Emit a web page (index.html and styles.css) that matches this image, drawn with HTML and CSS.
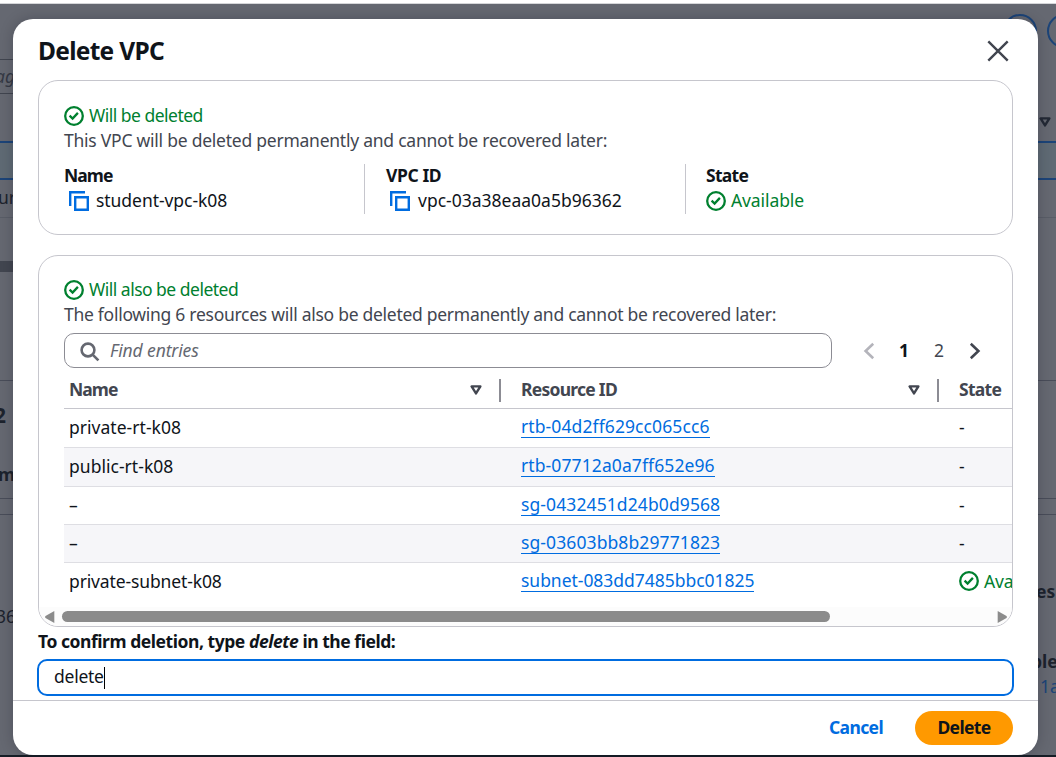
FILE: index.html
```html
<!DOCTYPE html>
<html lang="en">
<head>
<meta charset="utf-8">
<title>Delete VPC</title>
<link rel="stylesheet" href="styles.css">
</head>
<body>
<svg class="sprite" aria-hidden="true">
  <symbol id="check" viewBox="0 0 20 20"><circle cx="10" cy="10" r="8.8"/><path d="M5.6 9.6 8.6 12.6 13.9 6.9"/></symbol>
  <symbol id="copy" viewBox="0 0 20 20"><path d="M1.2 15V1.2H16M6.2 6.2H18.8V18.8H6.2Z"/></symbol>
  <symbol id="sort" viewBox="0 0 12 10"><path d="M1.6 1.4H10.4L6 8.4Z"/></symbol>
</svg>

<div class="page" aria-hidden="true">
  <div class="p-top"></div>
  <div class="p-head"><i class="ring"></i><i class="ring"></i></div>
  <div class="p-search"><em>ag</em></div>
  <div class="p-cols"><svg class="sort"><use href="#sort"/></svg></div>
  <div class="p-selected"></div>
  <div class="p-row"><span>ur</span></div>
  <div class="p-gap"></div>
  <div class="p-split"></div>
  <div class="p-panel"></div>
  <div class="p-title"><b>2</b></div>
  <div class="p-tabs"><b>m</b></div>
  <div class="p-line"></div>
  <div class="p-detail"><span class="p-id">36</span><div class="p-map"><b>es</b><b class="p-ble">ble</b><span class="p-az">1a</span></div></div>
  <div class="p-footer"></div>
</div>

<div class="dialog" role="dialog" aria-label="Delete VPC">
  <header class="dialog-head">
    <h1>Delete VPC</h1>
    <svg class="close" viewBox="0 0 22 22"><path d="M1.3 1.3 20.7 20.7M20.7 1.3 1.3 20.7"/></svg>
  </header>

  <section class="card card-vpc">
    <p class="status"><svg class="icon"><use href="#check"/></svg><span class="t-tight">Will be deleted</span></p>
    <p class="desc">This VPC will be deleted permanently and cannot be recovered later:</p>
    <div class="columns">
      <div class="col"><b class="k-name">Name</b><div class="value copyable"><svg class="icon"><use href="#copy"/></svg><span class="v-name">student-vpc-k08</span></div></div>
      <div class="col"><b class="k-id">VPC ID</b><div class="value copyable"><svg class="icon"><use href="#copy"/></svg><span class="v-id">vpc-03a38eaa0a5b96362</span></div></div>
      <div class="col"><b class="k-state">State</b><div class="value status"><svg class="icon"><use href="#check"/></svg><span class="v-state">Available</span></div></div>
    </div>
  </section>

  <section class="card card-resources">
    <p class="status"><svg class="icon"><use href="#check"/></svg><span class="t-tight">Will also be deleted</span></p>
    <p class="desc desc-res">The following 6 resources will also be deleted permanently and cannot be recovered later:</p>
    <div class="tools">
      <div class="search"><svg viewBox="0 0 20 20"><circle cx="8" cy="8" r="6.4"/><path d="M12.6 12.6 18.4 18.4"/></svg><em>Find entries</em></div>
      <nav class="pages">
        <svg class="prev" viewBox="0 0 12 18"><path d="M10.2 1.8 2.6 9l7.6 7.2"/></svg>
        <b>1</b><span>2</span>
        <svg class="next" viewBox="0 0 12 18"><path d="M1.8 1.8 9.4 9l-7.6 7.2"/></svg>
      </nav>
    </div>
    <div class="table">
      <div class="row head">
        <div class="cell"><span class="k-name">Name</span><svg class="sort"><use href="#sort"/></svg></div>
        <div class="cell"><span class="k-res">Resource ID</span><svg class="sort"><use href="#sort"/></svg></div>
        <div class="cell"><span class="k-state">State</span></div>
      </div>
      <div class="row"><div class="cell">private-rt-k08</div><div class="cell"><a>rtb-04d2ff629cc065cc6</a></div><div class="cell">-</div></div>
      <div class="row alt"><div class="cell">public-rt-k08</div><div class="cell"><a>rtb-07712a0a7ff652e96</a></div><div class="cell">-</div></div>
      <div class="row short"><div class="cell">–</div><div class="cell"><a>sg-0432451d24b0d9568</a></div><div class="cell">-</div></div>
      <div class="row short alt"><div class="cell">–</div><div class="cell"><a>sg-03603bb8b29771823</a></div><div class="cell">-</div></div>
      <div class="row last"><div class="cell tight">private-subnet-k08</div><div class="cell"><a class="subnet">subnet-083dd7485bbc01825</a></div><div class="cell status"><svg class="icon"><use href="#check"/></svg><span class="v-state">Available</span></div></div>
    </div>
    <div class="scroll">
      <svg viewBox="0 0 10 12"><path d="M9.3 0V12L0.5 7Q-.3 6 .5 5Z"/></svg>
      <div class="track"><div class="thumb"></div></div>
      <svg viewBox="0 0 10 12"><path d="M.7 0V12L9.5 7Q10.3 6 9.5 5Z"/></svg>
    </div>
  </section>

  <p class="confirm">To confirm deletion, type <em>delete</em> in the field:</p>
  <div class="input"><span>delete</span><i class="caret"></i></div>
  <footer class="dialog-foot">
    <button class="cancel">Cancel</button>
    <button class="primary">Delete</button>
  </footer>
</div>
</body>
</html>
```
FILE: styles.css
```css
* { box-sizing: border-box; }
body {
  margin: 0; width: 1056px; height: 757px; overflow: hidden;
  font: 17.5px/25px "Noto Sans", sans-serif; color: #0f141a; background: #656871;
}
h1, p { margin: 0; }
svg { fill: none; flex: none; }
.sprite { position: absolute; width: 0; height: 0; }

/* dimmed console page */
.page { display: flex; flex-direction: column; height: 757px; background: #656871; color: #1d232d; }
.page > div { flex: none; overflow: hidden; }
.p-top { height: 4px; background: #fff; border-bottom: 1px solid #d5d6d9; }
.p-head { height: 55px; display: flex; justify-content: flex-end; gap: 10px; padding-top: 10px; margin-right: -25px; }
.page .ring { flex: none; width: 34px; height: 34px; border: 2px solid #1c4478; border-radius: 50%; }
.p-search { height: 35px; width: 60px; border: solid #41454f; border-width: 1px 0; line-height: 33px; color: #343944; }
.p-search em { margin-left: -5px; }
.p-cols { height: 47px; padding: 23px 0 0 1039px; line-height: 0; }
.p-cols .sort { stroke: #232935; }
.p-selected { height: 39px; background: #5f6a74; border: solid #1c4478; border-width: 2px 0; }
.p-row { height: 38px; line-height: 35px; border-bottom: 1px solid #595d67; }
.p-row span { margin-left: -2px; }
.p-gap { height: 43px; }
.p-split { height: 11px; width: 60px; background: #424650; }
.p-panel { height: 109px; border-bottom: 1px solid #494d59; }
.p-title { height: 70px; font-size: 21px; line-height: 68px; }
.p-title b { margin-left: -6px; }
.p-tabs { height: 48px; line-height: 47px; border-bottom: 1px solid #494d59; }
.p-tabs b { margin-left: -2px; }
.p-line { height: 16px; border-bottom: 1px solid #494d59; }
.p-detail { height: 240px; display: flex; justify-content: space-between; }
.p-id { margin: 89px 0 0 -4px; }
.p-map { display: flex; flex-direction: column; width: 20px; padding-top: 64px; }
.p-ble { margin: 45px 0 0 -5px; }
.p-az { color: #1c4478; margin-left: 4px; }
.p-footer { height: 2px; background: #161d26; }

/* dialog */
.dialog {
  position: absolute; left: 13px; top: 19px; width: 1025px; height: 736px;
  background: #fff; border-radius: 20px; box-shadow: 0 0 14px rgba(0,7,22,.22);
  display: flex; flex-direction: column; overflow: hidden;
}
.dialog-head { height: 61px; padding: 3px 29px 0 25px; display: flex; align-items: center; justify-content: space-between; }
h1 { font-size: 24.5px; line-height: 30px; letter-spacing: -.7px; }
.close { width: 22px; height: 22px; stroke: #424650; stroke-width: 2.4; }
.card { margin: 0 25px; border: 1px solid #c6c6cd; border-radius: 20px; padding-left: 25px; overflow: hidden; flex: none; }
.card-vpc { height: 155px; padding-top: 22px; }
.card-resources { height: 372px; margin-top: 20px; padding-top: 21px; display: flex; flex-direction: column; }
.icon { width: 20px; height: 20px; stroke-width: 2.3; stroke: currentColor; }
.status { display: flex; align-items: center; gap: 5px; color: #00802f; }
.t-tight { letter-spacing: -.51px; }
.desc { color: #424650; letter-spacing: -.24px; }
.desc-res { letter-spacing: -.277px; }
.columns { display: flex; margin-top: 11px; }
.col { height: 50px; width: 321px; }
.col:first-child { width: 300px; }
.col + .col { border-left: 1px solid #c6c6cd; padding-left: 21px; }
.col + .col + .col { padding-left: 20px; }
.col b { display: block; margin-top: -1px; }
.value { display: flex; align-items: center; }
.copyable { padding-left: 5px; gap: 7px; }
.copyable .icon { color: #006ce0; stroke-width: 2.4; }
.col + .col .copyable { padding-left: 4px; gap: 8px; }
.copyable span { color: #0f141a; }
.k-name { letter-spacing: -.95px; }
.k-id { letter-spacing: -.4px; }
.k-state { letter-spacing: -.7px; }
.k-res { letter-spacing: -.74px; }
.v-name { letter-spacing: -.05px; }
.v-id { letter-spacing: 0; }
.v-state { letter-spacing: -.1px; }

.tools { display: flex; margin-top: 6px; }
.search { width: 768px; height: 35px; border: 1px solid #8c8c94; border-radius: 10px; padding-left: 15px; display: flex; align-items: center; gap: 10px; color: #656871; letter-spacing: 0; }
.search svg { width: 20px; height: 20px; stroke: #656871; stroke-width: 2.6; margin-top: 2px; }
.search em { line-height: 23px; letter-spacing: -.13px; }
.pages { display: flex; align-items: center; padding-left: 31px; }
.pages svg { width: 12px; height: 18px; stroke-width: 2.6; }
.pages b { width: 10px; margin-left: 24px; }
.pages span { width: 10px; margin: 0 25px 0 25px; color: #424650; }
.prev { stroke: #b4b4bb; }
.next { stroke: #424650; }

.table { margin-top: 3px; }
.row { display: grid; grid-template-columns: 436px 438px 1fr; height: 39px; border-bottom: 1px solid #dedee3; letter-spacing: .03px; }
.short { height: 38px; }
.alt { background: #f6f6f9; }
.last { height: 44px; border: 0; }
.cell { display: flex; align-items: center; padding-left: 21px; height: 36px; white-space: nowrap; }
.cell:first-child { padding-left: 5px; }
.tight { letter-spacing: -.13px; }
.head { height: 38px; color: #424650; font-weight: 700; border-color: #c6c6cd; letter-spacing: 0; }
.head .cell { justify-content: space-between; height: 37px; }
.head .cell + .cell { position: relative; }
.head .cell + .cell::before { content: ""; position: absolute; left: -1px; top: 8px; width: 2px; height: 23px; background: #8c8c94; }
.sort { width: 12px; height: 10px; stroke: #424650; stroke-width: 2.4; stroke-linejoin: round; margin-right: 18px; }
.cell a { color: #006ce0; letter-spacing: .1px; line-height: 21px; border-bottom: 1px solid #006ce0; }
.cell .subnet { letter-spacing: -.03px; }
.scroll { height: 19px; margin: auto 0 0 -25px; background: #fcfcfc; display: flex; align-items: center; padding: 0 5px 0 6px; }
.scroll svg { width: 10px; height: 12px; fill: #8b8b8b; }
.track { flex: 1; padding-left: 7px; }
.thumb { width: 768px; height: 11px; border-radius: 6px; background: #8b8b8b; }

.confirm { padding: 2px 25px 0; height: 32px; font-weight: 700; letter-spacing: -.45px; }
.input { height: 37px; margin: 0 24px; border: 2px solid #006ce0; border-radius: 10px; display: flex; align-items: center; padding-left: 15px; letter-spacing: -.25px; }
.input span { margin-top: -2px; }
.caret { width: 1px; height: 22px; background: #000; }
.dialog-foot { margin-top: 4px; flex: 1; border-top: 1px solid #c6c6cd; display: flex; align-items: flex-start; justify-content: flex-end; gap: 32px; padding: 10px 25px 0; }
button { font: 700 17.5px/25px "Noto Sans", sans-serif; letter-spacing: -.62px; border: 0; padding: 0 0 2px; height: 34px; background: none; }
.cancel { color: #006ce0; }
.primary { width: 98px; border-radius: 17px; background: #f90; color: #0f141a; }
```
